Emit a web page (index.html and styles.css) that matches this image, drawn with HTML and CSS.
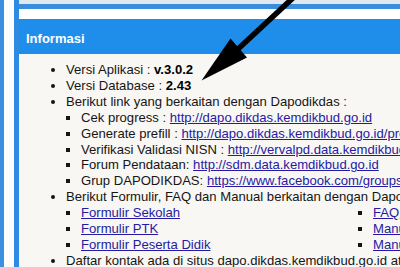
FILE: index.html
```html
<!DOCTYPE html>
<html>
<head>
<meta charset="utf-8">
<link rel="stylesheet" href="styles.css">
</head>
<body>
<div class="page">
  <div class="frame">
    <div class="topbox"></div>
    <div class="panel">
      <div class="panel-head">Informasi</div>
      <div class="panel-body">
        <ul class="list">
          <li>Versi Aplikasi : <b>v.3.0.2</b></li>
          <li>Versi Database : <b>2.43</b></li>
          <li>Berikut link yang berkaitan dengan Dapodikdas :
            <ul class="sub">
              <li>Cek progress : <a href="#">http://dapo.dikdas.kemdikbud.go.id</a></li>
              <li>Generate prefill : <a href="#">http://dapo.dikdas.kemdikbud.go.id/prefill</a></li>
              <li>Verifikasi Validasi NISN : <a href="#">http://vervalpd.data.kemdikbud.go.id</a></li>
              <li>Forum Pendataan: <a href="#">http://sdm.data.kemdikbud.go.id</a></li>
              <li>Grup DAPODIKDAS: <a href="#">https://www.facebook.com/groups/dapodikdas</a></li>
            </ul>
          </li>
          <li>Berikut Formulir, FAQ dan Manual berkaitan dengan Dapodikdas :
            <div class="cols">
              <ul class="sub col-left">
                <li><a href="#">Formulir Sekolah</a></li>
                <li><a href="#">Formulir PTK</a></li>
                <li><a href="#">Formulir Peserta Didik</a></li>
              </ul>
              <ul class="sub col-right">
                <li><a href="#">FAQ</a></li>
                <li><a href="#">Manual Aplikasi</a></li>
                <li><a href="#">Manual Prefill</a></li>
              </ul>
            </div>
          </li>
          <li>Daftar kontak ada di situs dapo.dikdas.kemdikbud.go.id atau</li>
        </ul>
      </div>
    </div>
  </div>
  <svg class="arrow" width="400" height="267" viewBox="0 0 400 267">
    <line x1="294" y1="-3" x2="238" y2="49" stroke="#000" stroke-width="5.5"/>
    <polygon points="201.5,80.5 230.5,38.5 247,57.5" fill="#000"/>
  </svg>
</div>
</body>
</html>
```

FILE: styles.css
```css
html, body {
  margin: 0;
  padding: 0;
  width: 400px;
  height: 267px;
  overflow: hidden;
  background: #ffffff;
}

.page {
  position: relative;
  width: 400px;
  height: 267px;
  overflow: hidden;
  border-left: 4px solid #3b8fe0;
  padding-left: 10px;
  box-sizing: border-box;
  background: #fbfdff;
}

.frame {
  border-left: 5px solid #2f8be2;
  height: 100%;
  background: #ffffff;
}

.topbox {
  height: 4px;
  background: #dfe8ef;
  border-bottom: 5px solid #3a8ddd;
}

.panel {
  margin-top: 10px;
  background: #f8f7f4;
  height: 300px;
}

.panel-head {
  background: #1f8eea;
  color: #ffffff;
  font-family: "Liberation Sans", Arial, sans-serif;
  font-weight: bold;
  font-size: 13px;
  line-height: 14px;
  height: 35px;
  box-sizing: border-box;
  padding: 13px 7px 8px 7px;
}

.panel-body {
  padding: 8px 0 0 7px;
  font-family: "Liberation Sans", Arial, sans-serif;
  font-size: 13.1px;
  line-height: 15.9px;
  color: #161514;
  white-space: nowrap;
}

.list {
  margin: 0;
  padding-left: 40px;
  list-style: disc;
}

.sub {
  margin: 0;
  padding-left: 15px;
  list-style: square;
}

.panel-body a {
  color: #261aa3;
  text-decoration: underline;
}

.panel-body b {
  color: #000000;
}

.cols {
  display: flex;
}

.col-left {
  width: 292px;
  flex: none;
  box-sizing: border-box;
}

.col-right {
  flex: none;
}

.arrow {
  position: absolute;
  left: -4px;
  top: 0;
}
```
